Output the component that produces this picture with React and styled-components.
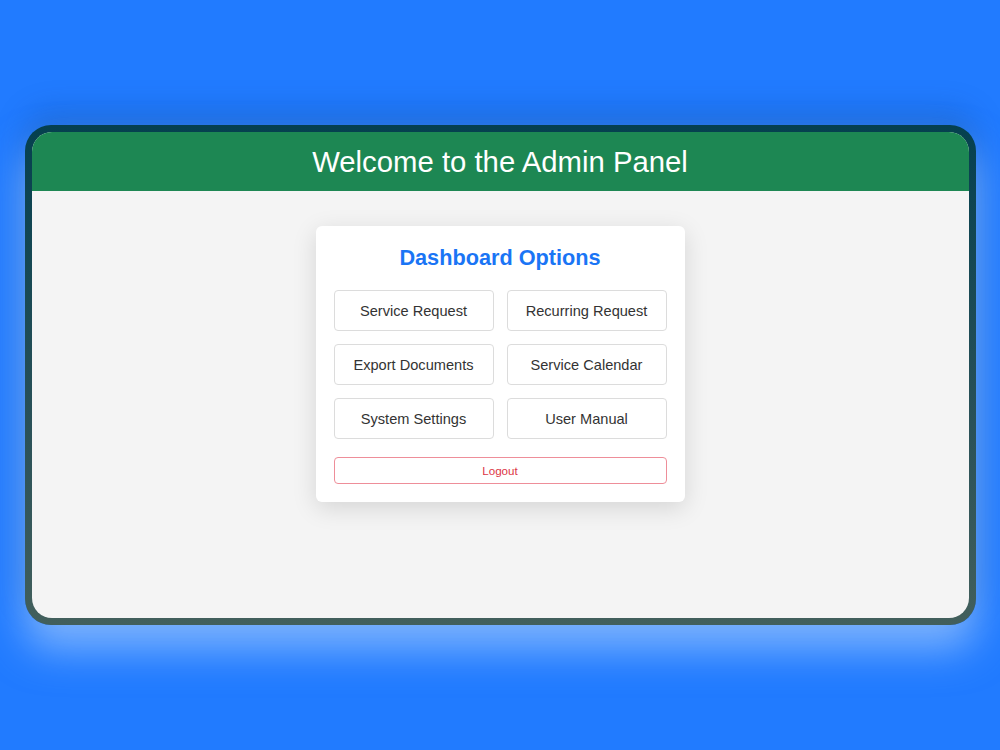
import React from 'react';
import styled, { createGlobalStyle } from 'styled-components';

const GlobalStyle = createGlobalStyle`
  html, body {
    margin: 0;
    padding: 0;
    background: #217bff;
    font-family: 'Liberation Sans', Arial, sans-serif;
  }
`;

const options = [
  'Service Request',
  'Recurring Request',
  'Export Documents',
  'Service Calendar',
  'System Settings',
  'User Manual',
];

const Page = styled.div`
  width: 1000px;
  height: 750px;
  display: flex;
  align-items: center;
  justify-content: center;
  background: #217bff;
`;

const Frame = styled.div`
  width: 951px;
  height: 500px;
  box-sizing: border-box;
  padding: 7px;
  border-radius: 26px;
  background: linear-gradient(180deg, #05404f 0%, #2a5158 60%, #425f5c 100%);
  box-shadow:
    0 24px 40px rgba(200, 225, 255, 0.55),
    0 -14px 30px rgba(10, 60, 120, 0.25);
`;

const Screen = styled.div`
  height: 100%;
  border-radius: 20px;
  overflow: hidden;
  background: #f4f4f4;
  display: flex;
  flex-direction: column;
  align-items: center;
`;

const Header = styled.header`
  align-self: stretch;
  height: 59px;
  background: #1d8753;
  display: flex;
  align-items: center;
  justify-content: center;
`;

const Title = styled.h1`
  margin: 0;
  font-size: 29.3px;
  font-weight: 400;
  color: #ffffff;
`;

const Card = styled.div`
  margin-top: 35px;
  width: 369px;
  box-sizing: border-box;
  padding: 18px;
  background: #ffffff;
  border-radius: 6px;
  box-shadow: 0 6px 24px rgba(0, 0, 0, 0.13);
`;

const CardTitle = styled.h2`
  margin: 0 0 18px;
  line-height: 28px;
  font-size: 21.7px;
  font-weight: 700;
  text-align: center;
  color: #1a75f5;
`;

const Grid = styled.div`
  display: grid;
  grid-template-columns: 1fr 1fr;
  gap: 13px;
`;

const OptionButton = styled.button`
  height: 41px;
  background: #ffffff;
  border: 1px solid #dcdcdc;
  border-radius: 4px;
  font-family: inherit;
  font-size: 14.6px;
  color: #333333;
  cursor: pointer;
`;

const LogoutButton = styled.button`
  display: block;
  width: 100%;
  margin-top: 18px;
  height: 27px;
  background: #ffffff;
  border: 1px solid #ee8e99;
  border-radius: 4px;
  font-family: inherit;
  font-size: 11.6px;
  color: #dc3545;
  cursor: pointer;
`;

export default function App() {
  return (
    <Page>
      <GlobalStyle />
      <Frame>
        <Screen>
          <Header>
            <Title>Welcome to the Admin Panel</Title>
          </Header>
          <Card>
            <CardTitle>Dashboard Options</CardTitle>
            <Grid>
              {options.map((label) => (
                <OptionButton key={label} type="button">{label}</OptionButton>
              ))}
            </Grid>
            <LogoutButton type="button">Logout</LogoutButton>
          </Card>
        </Screen>
      </Frame>
    </Page>
  );
}
